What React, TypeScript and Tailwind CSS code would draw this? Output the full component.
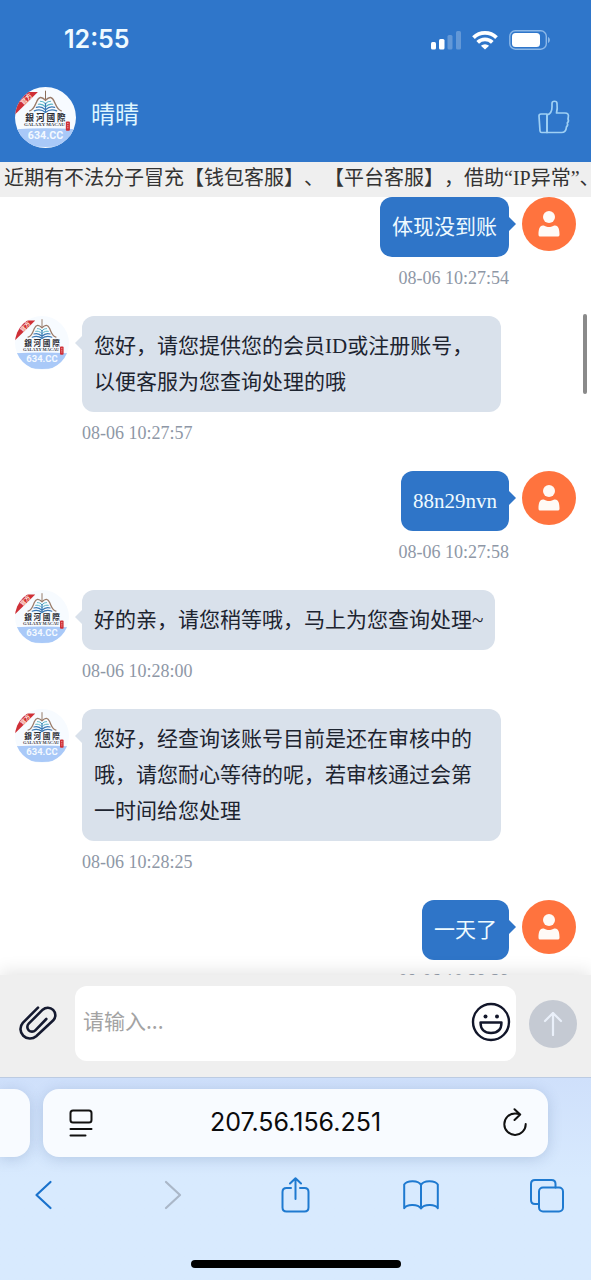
import { useState } from 'react';

type Message = {
  id: number;
  from: 'agent' | 'user';
  text: string;
  time: string;
};

const messages: Message[] = [
  { id: 1, from: 'user', text: '体现没到账', time: '08-06 10:27:54' },
  { id: 2, from: 'agent', text: '您好，请您提供您的会员ID或注册账号，以便客服为您查询处理的哦', time: '08-06 10:27:57' },
  { id: 3, from: 'user', text: '88n29nvn', time: '08-06 10:27:58' },
  { id: 4, from: 'agent', text: '好的亲，请您稍等哦，马上为您查询处理~', time: '08-06 10:28:00' },
  { id: 5, from: 'agent', text: '您好，经查询该账号目前是还在审核中的哦，请您耐心等待的呢，若审核通过会第一时间给您处理', time: '08-06 10:28:25' },
  { id: 6, from: 'user', text: '一天了', time: '08-06 10:29:29' },
];

function AgentLogo({ className, id }: { className: string; id: string }) {
  return (
    <svg viewBox="0 0 60 60" className={className} role="img" aria-label="銀河國際">
      <clipPath id={id}>
        <circle cx="30" cy="30" r="30" />
      </clipPath>
      <g clipPath={`url(#${id})`}>
        <rect width="60" height="60" fill="#f7fbff" />
        <path d="M0 41.500q30-2 60 0V54q-30 10-60 0z" fill="#a9c9f8" />
        <path d="M22.500 5H12L0 17.500V27z" fill="#cf2f36" />
        <text x="0" y="2" fontSize="6.500" fontWeight="700" fill="#ffe3dc" textAnchor="middle" transform="translate(11.500 12) rotate(-44)" className="font-['Noto_Sans_CJK_SC',sans-serif]">官方</text>
        {/* open book */}
        <g fill="none" strokeLinecap="round">
          <path d="M30 4v9" stroke="#8a6d5a" strokeWidth="1" />
          <path d="M14.500 23.500c4-1 5-5 7-9.500s4.500-5 8.500-1c4-4 6.500-3.500 8.500 1s3 8.500 7 9.500" stroke="#9a7c6a" strokeWidth="1.400" />
          <path d="M30 16.500c-1.500-2-3.500-2.500-5-2.500M30 16.500c1.500-2 3.500-2.500 5-2.500M30 19.500c-2.500-2.500-5-3-7-2.500M30 19.500c2.500-2.500 5-3 7-2.500" stroke="#58b3c4" strokeWidth="1.100" />
          <path d="M30 22.500c-3-3-6-3.500-9-2.500M30 22.500c3-3 6-3.500 9-2.500M30 25c-3-2.500-7-3-11-1.500M30 25c3-2.500 7-3 11-1.500M30 16v9" stroke="#3a78b4" strokeWidth="1.200" />
        </g>
        <text x="30" y="33.500" fontSize="8.500" fontWeight="700" fill="#2b2b33" textAnchor="middle" className="font-['Noto_Sans_CJK_TC',sans-serif]">銀 河 國 際</text>
        <text x="29" y="38.500" fontSize="4.800" fontWeight="700" fill="#3c3c44" textAnchor="middle" className="font-['Liberation_Serif',serif]">GALAXY MACAU</text>
        <rect x="50" y="34" width="4" height="9" rx="1" fill="#cf2f36" />
        <path d="M52 35.500v6" stroke="#f6c6c4" strokeWidth="1" strokeDasharray="1 1" />
        <text x="30" y="51.500" fontSize="10.500" fontWeight="700" fill="#f4f9ff" textAnchor="middle" className="font-['Roboto',sans-serif]">634.CC</text>
      </g>
    </svg>
  );
}

function UserAvatar() {
  return (
    <svg viewBox="0 0 54 54" className="size-[54px] shrink-0" fill="#fffaf6" role="img" aria-label="用户">
      <circle cx="27" cy="27" r="27" fill="#ff733e" />
      <circle cx="27" cy="20" r="6" />
      <path d="M16.500 37.500c0-4.500.8-9 4.500-9 2 0 2.500 1.500 6 1.500s4-1.500 6-1.500c3.700 0 4.500 4.500 4.500 9 0 1.400-.6 2-2 2h-17c-1.400 0-2-.6-2-2z" />
    </svg>
  );
}

function StatusIcons() {
  return (
    <div className="flex items-center gap-[11px]">
      <svg viewBox="0 0 30 20" className="h-5 w-[30px]" fill="#fff">
        <rect x="0" y="12" width="5" height="7.500" rx="1.500" />
        <rect x="8" y="9" width="5.500" height="10.500" rx="1.500" />
        <rect x="16.500" y="5" width="5" height="14.500" rx="1.500" opacity=".25" />
        <rect x="25" y="1" width="5" height="18.500" rx="1.500" opacity=".25" />
      </svg>
      <svg viewBox="0 0 26 20" className="h-5 w-[26px]" fill="none" stroke="#fff" strokeWidth="3.800">
        <path d="M1.500 7.600a16.300 16.300 0 0 1 23 0M5.700 12.300a10.400 10.400 0 0 1 14.600 0" />
        <path d="M13 19.500 8.900 15.800a6 6 0 0 1 8.200 0z" fill="#fff" stroke="none" />
      </svg>
      <svg viewBox="0 0 42 20" className="h-5 w-[42px]">
        <rect x=".8" y=".8" width="36.500" height="18.400" rx="5.500" fill="none" stroke="#8cb8e8" strokeWidth="1.400" />
        <rect x="3" y="3" width="28" height="14" rx="3.500" fill="#fff" />
        <path d="M39 7c2.500 1 2.500 5 0 6z" fill="#8cb8e8" />
      </svg>
    </div>
  );
}

function MessageRow({ message }: { message: Message }) {
  if (message.from === 'user') {
    return (
      <li className="flex justify-end gap-[13px] pb-6">
        <div className="flex flex-col items-end">
          <div className="relative rounded-xl bg-[#2f75c8] px-3 py-3 text-[21px] leading-9 text-[#eefaff]">
            {message.text}
            <span className="absolute top-[19px] -right-[7px] border-y-8 border-l-8 border-y-transparent border-l-[#2f75c8]" />
          </div>
          <time className="mt-2 text-[18px] leading-[27px] text-[#8e97a6]">{message.time}</time>
        </div>
        <UserAvatar />
      </li>
    );
  }

  return (
    <li className="flex gap-[13px] pr-[75px] pb-6">
      <AgentLogo className="size-[54px] shrink-0" id={`logo-${message.id}`} />
      <div className="flex flex-col items-start">
        <div className="relative rounded-xl bg-[#d9e1eb] px-3 py-3 text-[21px] leading-9 text-[#1d2430]">
          {message.text}
          <span className="absolute top-[19px] -left-[7px] border-y-8 border-r-8 border-y-transparent border-r-[#d9e1eb]" />
        </div>
        <time className="mt-2 text-[18px] leading-[27px] text-[#8e97a6]">{message.time}</time>
      </div>
    </li>
  );
}

function Composer() {
  const [draft, setDraft] = useState('');

  return (
    <form className="relative flex items-center gap-[13px] bg-[#efefef] px-[14px] pt-[11px] pb-4 shadow-[0_-4px_16px_rgba(0,0,0,0.10)]" onSubmit={(e) => e.preventDefault()}>
      <button type="button" aria-label="附件" className="flex w-12 shrink-0 justify-center">
        <svg viewBox="0 0 40 40" className="size-10" fill="none" stroke="#151a30" strokeWidth="2.600" strokeLinecap="round" strokeLinejoin="round">
          <path d="M20 3.700 4.800 18.800a9.500 9.500 0 0 0 13.400 13.400L35.300 16.300A7.500 7.500 0 0 0 24.700 5.700L10.700 19.700a4.600 4.600 0 0 0 6.600 6.600L28.300 15" />
        </svg>
      </button>
      <div className="flex h-[75px] flex-1 items-center rounded-xl bg-white pr-[5px]">
        <textarea
          aria-label="请输入"
          placeholder="请输入..."
          value={draft}
          onChange={(e) => setDraft(e.target.value)}
          className="h-full min-w-0 flex-1 resize-none px-2 py-4 font-['Noto_Sans_CJK_SC',sans-serif] text-[21px] leading-9 outline-none placeholder:text-[#a3a3a3]"
        />
        <button type="button" aria-label="表情" className="shrink-0 pb-1">
          <svg viewBox="0 0 40 40" className="size-10" fill="none" stroke="#12162a" strokeWidth="2.400" strokeLinejoin="round">
            <circle cx="20" cy="20" r="18" />
            <path d="M9.500 20.500h21c0 7-4 10.500-10.500 10.500S9.500 27.500 9.500 20.500z" />
            <circle cx="14.500" cy="14.500" r="2" fill="#12162a" stroke="none" />
            <circle cx="26" cy="14.500" r="2" fill="#12162a" stroke="none" />
          </svg>
        </button>
      </div>
      <button type="submit" aria-label="发送" className="flex size-12 shrink-0 items-center justify-center rounded-full bg-[#c5cad3]">
        <svg viewBox="0 0 24 24" className="size-6" fill="none" stroke="#eaf0fa" strokeWidth="2.200" strokeLinecap="round" strokeLinejoin="round">
          <path d="M12 23V1M4 9l8-8 8 8" />
        </svg>
      </button>
    </form>
  );
}

function BrowserBar() {
  return (
    <footer className="relative overflow-hidden border-t border-[#bccbe2] bg-linear-to-b from-[#cfe0fb] to-[#d8eafe] to-50% pb-3">
      <div className="flex gap-[13px] pt-[11px] pr-[43px]">
        <div className="w-[30px] shrink-0 rounded-r-2xl bg-[#f8fbff] shadow-[0_2px_14px_rgba(60,90,140,0.22)]" />
        <div className="flex h-[68px] min-w-0 flex-1 items-center rounded-2xl bg-[#f8fbff] px-5 shadow-[0_2px_14px_rgba(60,90,140,0.22)]">
          <button type="button" aria-label="页面菜单" className="flex w-9 shrink-0 justify-center">
            <svg viewBox="0 0 26 30" className="h-[30px] w-[26px]" fill="none" stroke="#111" strokeWidth="2" strokeLinecap="round">
              <rect x="2.500" y="2.500" width="21" height="12" rx="2.500" />
              <path d="M2.500 21h21M2.500 27.500h15" />
            </svg>
          </button>
          <input aria-label="网址" readOnly value="207.56.156.251" className="min-w-0 flex-1 text-center font-['Inter',sans-serif] text-[25px] text-[#0b0b0d] outline-none" />
          <button type="button" aria-label="刷新" className="flex w-9 shrink-0 justify-end">
            <svg viewBox="0 0 26 30" className="h-[30px] w-[26px]" fill="none" stroke="#111" strokeWidth="2" strokeLinecap="round" strokeLinejoin="round">
              <path d="M23.700 16A10.700 10.700 0 1 1 13 5.500q2.500 0 5 1M12.500 1.200l5.700 5.300-5.700 5.500" />
            </svg>
          </button>
        </div>
      </div>
      <nav className="flex h-[75px] items-center justify-between px-[26px]">
        <button type="button" aria-label="后退">
          <svg viewBox="0 0 36 36" className="size-9" fill="none" stroke="#1a72cc" strokeWidth="2.200" strokeLinecap="round" strokeLinejoin="round">
            <path d="M24.500 5 10.500 18l14 13" />
          </svg>
        </button>
        <button type="button" aria-label="前进" disabled>
          <svg viewBox="0 0 36 36" className="size-9" fill="none" stroke="#aab7c8" strokeWidth="2.200" strokeLinecap="round" strokeLinejoin="round">
            <path d="m14 5 14 13-14 13" />
          </svg>
        </button>
        <button type="button" aria-label="分享">
          <svg viewBox="0 0 36 36" className="size-9" fill="none" stroke="#1f7ad0" strokeWidth="2" strokeLinecap="round" strokeLinejoin="round">
            <path d="M13 11H8.500Q4.500 11 4.500 15v15.500q0 4 4 4h18q4 0 4-4V15q0-4-4-4H22M17.500 22V1.200M12 6.500l5.500-5.300L23 6.500" />
          </svg>
        </button>
        <button type="button" aria-label="书签">
          <svg viewBox="0 0 36 36" className="size-9" fill="none" stroke="#1f7ad0" strokeWidth="2" strokeLinecap="round" strokeLinejoin="round">
            <path d="M18 8C15.500 3 4 3 1.200 7.500v23.700c3-4.500 13.800-4 16.800.3 3-4.300 13.800-4.800 16.800-.3V7.500C32 3 20.500 3 18 8zv23.500" />
          </svg>
        </button>
        <button type="button" aria-label="标签页">
          <svg viewBox="0 0 36 36" className="size-9" fill="none" stroke="#1f7ad0" strokeWidth="2" strokeLinecap="round" strokeLinejoin="round">
            <rect x="10" y="10.500" width="24" height="24" rx="4" />
            <path d="M10 27H6q-4 0-4-4V7q0-4 4-4h16.500q4 0 4 4v3.500" />
          </svg>
        </button>
      </nav>
      <div className="mx-auto mt-7 h-2 w-[210px] rounded-full bg-black" />
    </footer>
  );
}

export default function App() {
  return (
    <div className="flex h-screen flex-col bg-white font-['Liberation_Serif','Noto_Sans_CJK_SC',serif] [text-spacing-trim:space-all]" lang="zh-CN">
      <header className="bg-[#2f76ca]">
        <div className="flex h-[72px] items-center justify-between pt-2 pr-10 pl-16 text-[#effaff]">
          <span className="font-['Inter',sans-serif] text-[25px] font-semibold">12:55</span>
          <StatusIcons />
        </div>
        <div className="flex h-[90px] items-center px-[15px]">
          <AgentLogo className="size-[61px] shrink-0" id="logo-header" />
          <h1 className="ml-[15px] flex-1 pb-1 text-[24px] text-[#dff6ff]">晴晴</h1>
          <button type="button" aria-label="评价" className="mr-1">
            <svg viewBox="0 0 36 36" className="size-9" fill="none" stroke="#9fd0f4" strokeWidth="1.700" strokeLinecap="round" strokeLinejoin="round">
              <path d="M5 15h6v18.500H5.700q-1.500 0-1.700-1.500L3 17q0-2 2-2z" />
              <path d="M11 16c3.500-1 5-4 5-8V4.500c0-3 5-3 5 0 .4 3 .4 6-.5 9.500H29c2.500 0 4 1.500 3.300 4L32 20c.8 1.500.4 3-.7 4 .6 1.500.2 3-.9 4-.2 3.500-1.900 5.500-4.900 5.500H11z" />
            </svg>
          </button>
        </div>
      </header>

      <p className="h-[35px] overflow-hidden bg-[#efefef] px-1 text-[20px] leading-8 whitespace-nowrap text-[#333]">
        近期有不法分子冒充【钱包客服】、【平台客服】，借助“IP异常”、
      </p>

      <main className="relative min-h-0 flex-1 overflow-hidden">
        <ul className="px-[15px]">
          {messages.map((message) => (
            <MessageRow key={message.id} message={message} />
          ))}
        </ul>
        {/* scroll thumb */}
        <div className="absolute top-[117px] right-1 h-20 w-1 rounded-full bg-[#8a8a8a]" />
      </main>

      <Composer />
      <BrowserBar />
    </div>
  );
}
